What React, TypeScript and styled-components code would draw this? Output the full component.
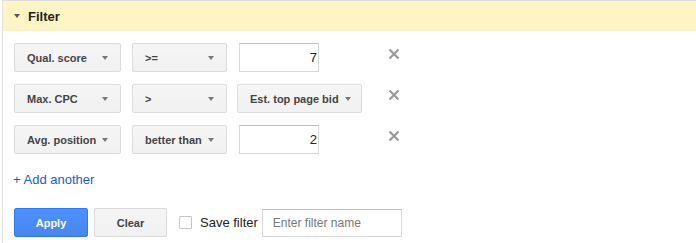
import React from "react";
import styled, { createGlobalStyle } from "styled-components";

const Global = createGlobalStyle`
  html, body { margin: 0; padding: 0; background: #fff; }
  body { font-family: "Liberation Sans", Arial, sans-serif; color: #222; }
`;

const Panel = styled.div`
  width: 694px;
  height: 243px;
  margin-left: 2px;
  border-top: 1px solid #dcdcdc;
  border-left: 1px solid #e3e3e3;
  box-sizing: border-box;
  overflow: hidden;
`;

const Header = styled.div`
  height: 30px;
  background: #fff4c4;
  display: flex;
  align-items: center;
  padding-left: 11px;
  gap: 8px;
`;

const Caret = styled.span<{ $color?: string }>`
  width: 0;
  height: 0;
  border-left: 3px solid transparent;
  border-right: 3px solid transparent;
  border-top: 4px solid ${(p) => p.$color || "#777"};
  flex: none;
`;

const Title = styled.span`
  font-size: 13px;
  font-weight: bold;
  color: #222;
  line-height: 15px;
`;

const Body = styled.div`
  padding: 12px 0 0 11px;
  display: flex;
  flex-direction: column;
`;

const Rows = styled.div`
  display: flex;
  flex-direction: column;
  gap: 12px;
`;

const Row = styled.div`
  display: flex;
  align-items: center;
  height: 29px;
`;

const Select = styled.div<{ $width?: number }>`
  box-sizing: border-box;
  height: 29px;
  ${(p) => (p.$width ? `width: ${p.$width}px;` : "")}
  padding: 0 12px 0 12px;
  display: flex;
  align-items: center;
  justify-content: space-between;
  gap: 6px;
  background: linear-gradient(#f5f5f5, #f1f1f1);
  border: 1px solid #dcdcdc;
  border-radius: 2px;
  font-size: 11px;
  font-weight: bold;
  color: #444;
  white-space: nowrap;
`;

const ValueCell = styled.div`
  width: 125px;
  margin-left: 10px;
  display: flex;
`;

const NumberInput = styled.div`
  box-sizing: border-box;
  width: 80px;
  height: 29px;
  margin-left: 2px;
  border: 1px solid #d9d9d9;
  border-top-color: #c0c0c0;
  background: #fff;
  display: flex;
  align-items: center;
  justify-content: flex-end;
  padding-right: 1px;
  font-size: 13px;
  color: #222;
`;

const Remove = styled.div`
  margin-left: 26px;
  width: 12px;
  height: 12px;
  align-self: flex-start;
  margin-top: 5px;
  display: flex;
`;

const AddLink = styled.a`
  margin-top: 18px;
  font-size: 13px;
  line-height: 15px;
  color: #1a5bc7;
  text-decoration: none;
  align-self: flex-start;
  margin-left: -1px;
`;

const Actions = styled.div`
  margin-top: 21px;
  display: flex;
  align-items: center;
`;

const Button = styled.button<{ $primary?: boolean; $width: number }>`
  box-sizing: border-box;
  width: ${(p) => p.$width}px;
  height: 29px;
  border-radius: 2px;
  border: 1px solid ${(p) => (p.$primary ? "#3079ed" : "#d9d9d9")};
  background: ${(p) => (p.$primary ? "linear-gradient(#4d90fe, #4787ed)" : "linear-gradient(#f5f5f5, #f1f1f1)")};
  color: ${(p) => (p.$primary ? "#fff" : "#444")};
  font-family: "Liberation Sans", Arial, sans-serif;
  font-size: 11px;
  font-weight: bold;
  padding: 0;
  margin-right: 6px;
`;

const Check = styled.span`
  box-sizing: border-box;
  width: 13px;
  height: 13px;
  border: 1px solid #c6c6c6;
  border-radius: 1px;
  background: #fff;
  margin-left: 6px;
  flex: none;
`;

const CheckLabel = styled.span`
  font-size: 13px;
  color: #222;
  margin-left: 8px;
`;

const NameInput = styled.input`
  box-sizing: border-box;
  width: 140px;
  height: 28px;
  margin-left: 4px;
  border: 1px solid #d9d9d9;
  border-top-color: #c0c0c0;
  padding: 0 0 0 10px;
  font-family: "Liberation Sans", Arial, sans-serif;
  font-size: 12px;
  outline: none;
  &::placeholder { color: #777; }
`;

const XIcon = () => (
  <svg width="12" height="12" viewBox="0 0 12 12">
    <path d="M1.5 1.5 L10.5 10.5 M10.5 1.5 L1.5 10.5" stroke="#9a9a9a" strokeWidth="2.2" />
  </svg>
);

type Filter = { field: string; op: string; value: string; valueIsSelect?: boolean };

const filters: Filter[] = [
  { field: "Qual. score", op: ">=", value: "7" },
  { field: "Max. CPC", op: ">", value: "Est. top page bid", valueIsSelect: true },
  { field: "Avg. position", op: "better than", value: "2" },
];

export default function App() {
  return (
    <>
      <Global />
      <Panel>
        <Header>
          <Caret $color="#555" />
          <Title>Filter</Title>
        </Header>
        <Body>
          <Rows>
            {filters.map((f) => (
              <Row key={f.field}>
                <Select $width={107} style={{ marginRight: 11 }}>
                  <span>{f.field}</span>
                  <Caret />
                </Select>
                <Select $width={95}>
                  <span>{f.op}</span>
                  <Caret />
                </Select>
                <ValueCell>
                  {f.valueIsSelect ? (
                    <Select $width={125}>
                      <span>{f.value}</span>
                      <Caret />
                    </Select>
                  ) : (
                    <NumberInput>{f.value}</NumberInput>
                  )}
                </ValueCell>
                <Remove>
                  <XIcon />
                </Remove>
              </Row>
            ))}
          </Rows>
          <AddLink href="#">+ Add another</AddLink>
          <Actions>
            <Button $primary $width={74}>Apply</Button>
            <Button $width={73}>Clear</Button>
            <Check />
            <CheckLabel>Save filter</CheckLabel>
            <NameInput placeholder="Enter filter name" />
          </Actions>
        </Body>
      </Panel>
    </>
  );
}
